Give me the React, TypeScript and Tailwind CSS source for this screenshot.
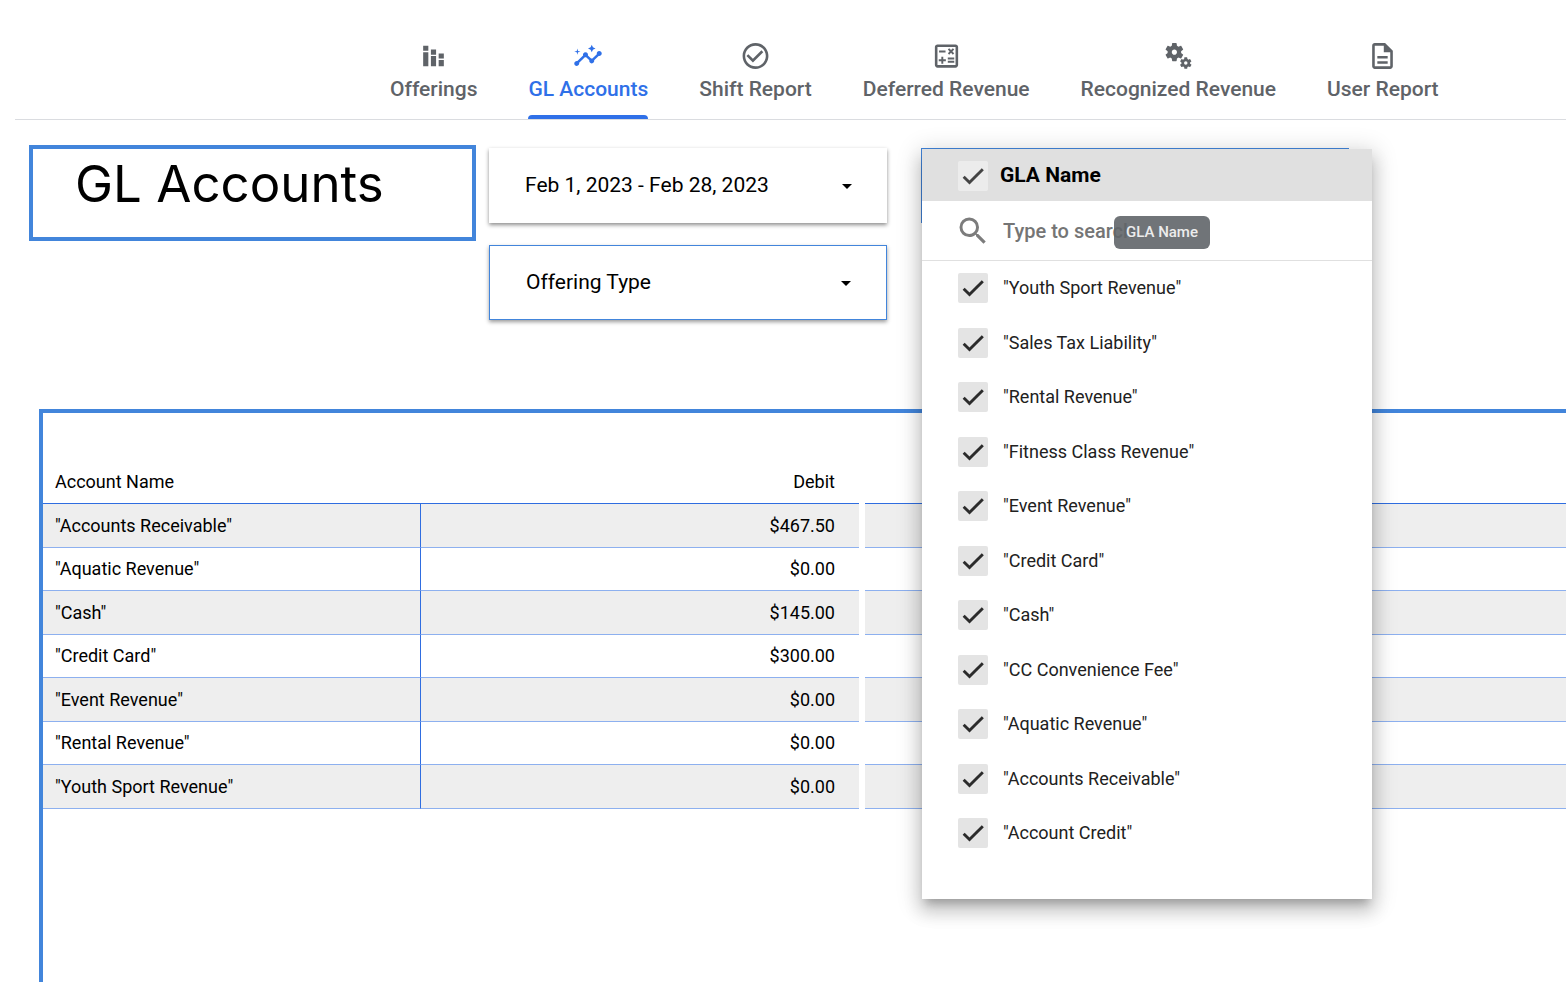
import { useState } from "react";
import {
  MdArrowDropDown,
  MdCheckCircleOutline,
  MdInsights,
  MdMiscellaneousServices,
  MdOutlineCalculate,
  MdOutlineDescription,
  MdSearch,
  MdStackedBarChart,
} from "react-icons/md";

const tabs = [
  { label: "Offerings", icon: MdStackedBarChart },
  { label: "GL Accounts", icon: MdInsights, active: true },
  { label: "Shift Report", icon: MdCheckCircleOutline },
  { label: "Deferred Revenue", icon: MdOutlineCalculate },
  { label: "Recognized Revenue", icon: MdMiscellaneousServices },
  { label: "User Report", icon: MdOutlineDescription },
];

const rows = [
  { name: "Accounts Receivable", debit: "$467.50" },
  { name: "Aquatic Revenue", debit: "$0.00" },
  { name: "Cash", debit: "$145.00" },
  { name: "Credit Card", debit: "$300.00" },
  { name: "Event Revenue", debit: "$0.00" },
  { name: "Rental Revenue", debit: "$0.00" },
  { name: "Youth Sport Revenue", debit: "$0.00" },
];

const glaNames = [
  "Youth Sport Revenue",
  "Sales Tax Liability",
  "Rental Revenue",
  "Fitness Class Revenue",
  "Event Revenue",
  "Credit Card",
  "Cash",
  "CC Convenience Fee",
  "Aquatic Revenue",
  "Accounts Receivable",
  "Account Credit",
];

const CheckIcon = ({ className }: { className: string }) => (
  <svg width="28" height="28" viewBox="0 0 24 24" fill="none" stroke="currentColor" strokeWidth="2.5" className={className}>
    <path d="M4 12.6 9 17.6 20.4 6.2" />
  </svg>
);

function Checkbox({ id, checked, onChange, light }: { id: string; checked: boolean; onChange: () => void; light?: boolean }) {
  return (
    <span className="grid size-[30px] shrink-0 place-items-center">
      <input
        id={id}
        type="checkbox"
        checked={checked}
        onChange={onChange}
        className={`col-start-1 row-start-1 size-full appearance-none rounded-xs ${light ? "bg-[#ececec]" : "bg-[#e4e4e4]"}`}
      />
      {checked && (
        <CheckIcon className={`pointer-events-none col-start-1 row-start-1 ${light ? "text-[#444]" : "text-[#2b2b2b]"}`} />
      )}
    </span>
  );
}

function GlaMenu() {
  const [selected, setSelected] = useState(glaNames);
  const [query, setQuery] = useState("");
  const all = selected.length === glaNames.length;

  const toggle = (name: string) =>
    setSelected(selected.includes(name) ? selected.filter((n) => n !== name) : [...selected, name]);

  return (
    <div className="absolute top-px left-px z-10 w-[450px] bg-white pb-[39px] shadow-[0_8px_8px_-4px_rgba(0,0,0,0.2),0_12px_16px_2px_rgba(0,0,0,0.14),0_4px_22px_4px_rgba(0,0,0,0.14)]">
      <div className="flex h-[52px] items-center gap-3 bg-[#e0e0e0] pt-px pl-9">
        <Checkbox id="gla-all" light checked={all} onChange={() => setSelected(all ? [] : glaNames)} />
        <label htmlFor="gla-all" className="text-[21px] font-bold">GLA Name</label>
      </div>
      <div className="relative flex h-[60px] items-center border-b border-[#e0e0e0] pl-[33px]">
        <MdSearch size={36} className="shrink-0 text-[#7c7c7c]" />
        <input
          type="text"
          aria-label="Search GLA names"
          placeholder="Type to search"
          value={query}
          onChange={(e) => setQuery(e.target.value)}
          className="min-w-0 flex-1 px-3 text-xl font-medium outline-none placeholder:text-[#757575]"
        />
        <div
          role="tooltip"
          className="absolute top-[15px] left-48 rounded-md bg-[#616569]/90 px-3 py-2 text-[15px] leading-[17px] font-medium text-[#ececec]"
        >
          GLA Name
        </div>
      </div>
      <ul>
        {glaNames
          .filter((name) => name.toLowerCase().includes(query.toLowerCase()))
          .map((name) => (
            <li key={name} className="flex h-[54px] items-center gap-[15px] pl-9 even:h-[55px]">
              <Checkbox id={name} checked={selected.includes(name)} onChange={() => toggle(name)} />
              <label htmlFor={name} className="text-lg text-[#212121]">"{name}"</label>
            </li>
          ))}
      </ul>
    </div>
  );
}

export default function App() {
  return (
    <div className="flex min-h-screen flex-col overflow-hidden bg-white font-['Roboto',sans-serif] text-black">
      <nav className="ml-[15px] flex gap-[51px] border-b border-[#dadce0] pt-10 pl-[375px]">
        {tabs.map(({ label, icon: Icon, active }) => (
          <a
            key={label}
            href="#"
            aria-current={active ? "page" : undefined}
            className={`flex h-[79px] flex-col items-center text-[21px] font-medium whitespace-nowrap ${active ? "text-[#2f70e8]" : "text-[#5f6368]"}`}
          >
            <Icon size={active ? 30 : 31} className="h-8" />
            <span className="leading-[34px]">{label}</span>
            {active && <span className="mt-auto h-1 w-full rounded-t-sm bg-[#2f70e8]" />}
          </a>
        ))}
      </nav>

      <div className="mt-[25px] ml-[29px] flex items-start">
        <h1 className="h-24 w-[447px] shrink-0 border-4 border-[#4285db] pl-[42px] font-['Inter',sans-serif] text-[51px] leading-[70px]">
          GL Accounts
        </h1>
        <div className="mt-[3px] ml-[13px] grid grid-cols-[398px_428px] gap-x-[34px] gap-y-[22px]">
          <button className="flex h-[75px] items-center justify-between bg-white pr-7 pl-9 text-[21px] shadow-[0_2px_4px_rgba(0,0,0,0.45)]">
            Feb 1, 2023 - Feb 28, 2023
            <MdArrowDropDown size={24} />
          </button>
          <div className="relative">
            <button aria-label="GLA Name" className="block h-[75px] w-full border border-[#4285db] bg-white" />
            <GlaMenu />
          </div>
          <button className="flex h-[75px] items-center justify-between border border-[#4285db] bg-white pr-7 pl-9 text-[21px] shadow-[0_2px_4px_rgba(0,0,0,0.4)]">
            Offering Type
            <MdArrowDropDown size={24} />
          </button>
        </div>
      </div>

      <main className="mt-[89px] ml-[39px] flex-1 border-t-4 border-l-4 border-[#4285db]">
        <table className="w-full table-fixed border-separate border-spacing-0 text-lg">
          <colgroup>
            <col className="w-[378px]" />
            <col className="w-[438px]" />
            <col className="w-[6px]" />
            <col />
          </colgroup>
          <thead>
            <tr className="h-[91px] align-bottom">
              <th className="border-b border-[#2f6de0] pb-[7px] pl-3 text-left font-normal">Account Name</th>
              <th className="border-b border-[#2f6de0] pr-6 pb-[7px] text-right font-normal">Debit</th>
              <td />
              <td className="border-b border-[#2f6de0]" />
            </tr>
          </thead>
          <tbody>
            {rows.map((row) => (
              <tr key={row.name} className="group h-11 even:h-[43px]">
                <td className="border-r border-b border-r-[#2f6de0] border-b-[#8db0ef] pl-3 group-odd:bg-[#eee]">"{row.name}"</td>
                <td className="border-b border-[#8db0ef] pr-6 text-right group-odd:bg-[#eee]">{row.debit}</td>
                <td />
                <td className="border-b border-[#8db0ef] group-odd:bg-[#eee]" />
              </tr>
            ))}
          </tbody>
        </table>
      </main>
    </div>
  );
}
